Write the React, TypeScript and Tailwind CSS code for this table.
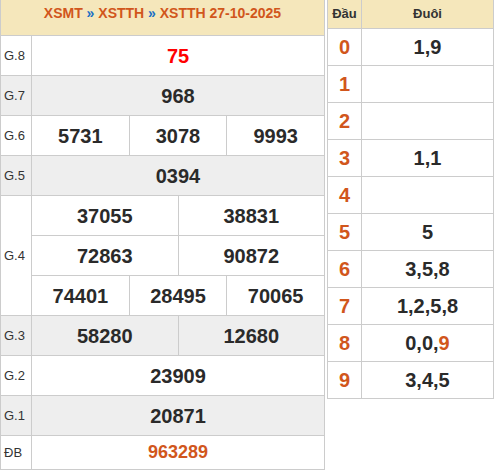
const num = "font-bold text-[20px] text-[#2a2a2a]";
const orange = "text-[#d1561c]";

type Row = { label: string; vals: string[][]; gray?: boolean; red?: boolean; db?: boolean };

const rows: Row[] = [
  { label: "G.8", vals: [["75"]], red: true },
  { label: "G.7", vals: [["968"]], gray: true },
  { label: "G.6", vals: [["5731", "3078", "9993"]] },
  { label: "G.5", vals: [["0394"]], gray: true },
  { label: "G.4", vals: [["37055", "38831"], ["72863", "90872"], ["74401", "28495", "70065"]] },
  { label: "G.3", vals: [["58280", "12680"]], gray: true },
  { label: "G.2", vals: [["23909"]] },
  { label: "G.1", vals: [["20871"]], gray: true },
  { label: "ĐB", vals: [["963289"]], db: true },
];

const loto: [string, React.ReactNode][] = [
  ["0", "1,9"],
  ["1", ""],
  ["2", ""],
  ["3", "1,1"],
  ["4", ""],
  ["5", "5"],
  ["6", "3,5,8"],
  ["7", "1,2,5,8"],
  ["8", <>0,0,<span className={orange}>9</span></>],
  ["9", "3,4,5"],
];

function PrizeRow({ row }: { row: Row }) {
  const h = row.db ? "h-[34px]" : "";
  return (
    <div className={`flex border-t border-[#ccc] ${row.gray ? "bg-[#eeeeee]" : "bg-white"} ${h}`}>
      <div className="w-[31px] shrink-0 border-r border-[#ccc] flex items-center pl-[3px] text-[13px] text-[#333]">
        {row.label}
      </div>
      <div className="flex-1 flex flex-col">
        {row.vals.map((line, i) => (
          <div key={i} className={`flex ${row.db ? "h-full" : "h-[39px]"} ${i > 0 ? "border-t border-[#ccc] h-[40px]" : ""}`}>
            {line.map((v, j) => (
              <div
                key={j}
                className={`flex-1 flex items-center justify-center ${j > 0 ? "border-l border-[#ccc]" : ""} ${
                  row.red
                    ? "font-bold text-[20px] text-[#f00]"
                    : row.db
                    ? `font-bold text-[18px] ${orange}`
                    : num
                }`}
              >
                {v}
              </div>
            ))}
          </div>
        ))}
      </div>
    </div>
  );
}

export default function App() {
  return (
    <div className="w-[494px] h-[471px] bg-white flex gap-[2px] items-start font-['Liberation_Sans',Arial,sans-serif]">
      <div className="w-[325px] shrink-0 border-l border-r border-b border-[#ccc] flex flex-col">
        <div className="h-[35px] bg-[#f5e7bb] flex justify-center pt-[5px] text-[14px] leading-[16px] font-bold">
          <span className={orange}>XSMT</span>
          <span className="text-[#1a6fc4] whitespace-pre"> » </span>
          <span className={orange}>XSTTH</span>
          <span className="text-[#1a6fc4] whitespace-pre"> » </span>
          <span className={`${orange} whitespace-pre`}>XSTTH 27-10-2025</span>
        </div>
        {rows.map((r) => (
          <PrizeRow key={r.label} row={r} />
        ))}
      </div>

      <div className="w-[167px] shrink-0 border-l border-r border-b border-[#ccc] flex flex-col">
        <div className="h-[28px] flex bg-[#f5e7bb] text-[13px] font-bold text-[#333]">
          <div className="w-[34px] shrink-0 border-r border-[#ccc] flex items-center justify-center">Đầu</div>
          <div className="flex-1 flex items-center justify-center">Đuôi</div>
        </div>
        {loto.map(([d, t]) => (
          <div key={d} className="h-[37px] flex border-t border-[#ccc] bg-white">
            <div className={`w-[34px] shrink-0 border-r border-[#ccc] flex items-center justify-center font-bold text-[20px] ${orange}`}>
              {d}
            </div>
            <div className={`flex-1 flex items-center justify-center ${num}`}>{t}</div>
          </div>
        ))}
      </div>
    </div>
  );
}
